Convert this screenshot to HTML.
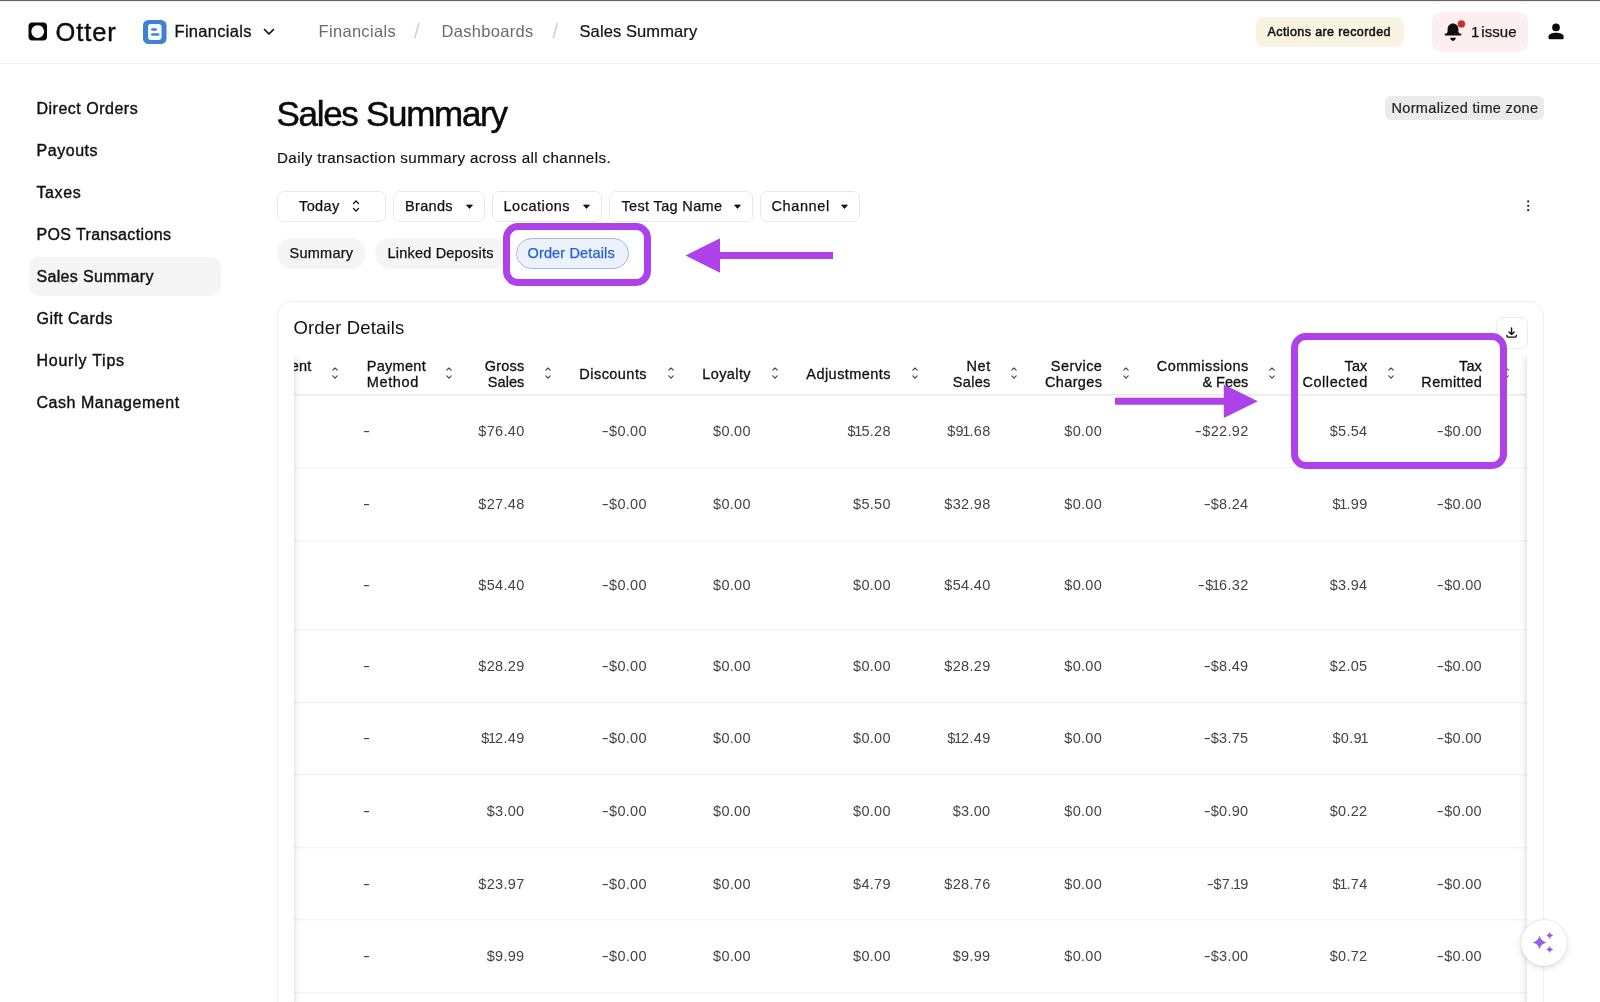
<!DOCTYPE html>
<html lang="en">
<head>
<meta charset="utf-8">
<title>Sales Summary</title>
<style>
*{box-sizing:border-box;margin:0;padding:0}
html,body{width:1600px;height:1002px;overflow:hidden;background:#fff}
body{font-family:"Liberation Sans",sans-serif;color:#111;position:relative}
.abs{position:absolute;white-space:nowrap}
.topline{left:0;top:0;width:1600px;height:2px;background:linear-gradient(#666 0,#666 50%,#ececec 50%,#ececec 100%)}
.hdr{left:0;top:0;width:1600px;height:64px;border-bottom:1px solid #efefef}
.t{position:absolute;white-space:nowrap;line-height:1}
.nav{font-size:16px;color:#111;left:36.500px;-webkit-text-stroke:0.4px #111}
.sel{left:29px;top:257px;width:192px;height:39px;border-radius:10px;background:#f5f5f5}
.bc{font-size:16.5px;top:23px;color:#6b6b6b}
.fbtn{top:191px;height:31px;border:1px solid #e8e8e8;border-radius:7px;background:#fff}
.ft{font-size:14.5px;top:199px;color:#111;-webkit-text-stroke:0.25px #111}
.pill{top:238px;height:31px;border-radius:16px;background:#f5f5f5}
.pt{font-size:14.5px;top:246px;color:#111;-webkit-text-stroke:0.25px #111}
.card{left:277px;top:301px;width:1267px;height:760px;border:1px solid #f0f0f0;border-radius:15px;background:#fff}
.th{font-size:14.5px;color:#111;-webkit-text-stroke:0.3px #111;text-align:right;line-height:16px}
.td{font-size:14.5px;color:#444;text-align:right;letter-spacing:0.3px}
.o{margin:0 -1.300px 0 -1.500px}
.hy{display:inline-block;transform:scaleX(1.450);transform-origin:100% 50%;margin-right:-0.200px}
.rowline{left:294px;width:1232px;height:1px;background:#ececec}
.pbox{border:7px solid #ad41ea;border-radius:15px}
</style>
</head>
<body>
<div id="root" style="position:absolute;left:0;top:0;width:1600px;height:1002px;overflow:hidden;will-change:transform">
<div class="abs hdr"></div>
<div class="abs topline"></div>


<!-- header -->
<svg class="abs" style="left:28px;top:22.400px" width="20" height="20" viewBox="0 0 20 20"><path fill-rule="evenodd" fill="#0a0a0a" d="M4 0.5h11.5c2 0 3.5 1.5 3.5 3.5v11c0 2-1.5 3.5-3.5 3.500H4c-2 0-3.500-1.500-3.500-3.500V4C0.500 2 2 0.500 4 0.500zM9.700 3.200c-3.600 0-6.300 2.800-6.300 6.400s2.700 6.400 6.300 6.400 6.300-2.800 6.300-6.400-2.700-6.400-6.300-6.400z"/></svg>
<div class="t" id="otter" style="left:55.500px;top:19.600px;font-size:25.5px;letter-spacing:0.9px;color:#0a0a0a;-webkit-text-stroke:0.4px #0a0a0a">Otter</div>
<svg class="abs" style="left:143px;top:20px" width="24" height="24" viewBox="0 0 24 24"><rect x="0" y="0" width="23.500" height="24" rx="5.500" fill="#3d84d4"/><rect x="5" y="4" width="13.500" height="16" rx="3.200" fill="#fff"/><rect x="8" y="8.200" width="6" height="2.600" rx="1.300" fill="#3d84d4"/><rect x="8" y="13.200" width="8.500" height="2.600" rx="1.300" fill="#3d84d4"/></svg>
<div class="t" id="fin" style="left:174.500px;top:23px;font-size:16.5px;letter-spacing:0.3px;-webkit-text-stroke:0.3px #111">Financials</div>
<svg class="abs" style="left:262px;top:26px" width="14" height="12" viewBox="0 0 14 12"><path d="M2.500 3.500L7 8l4.500-4.500" fill="none" stroke="#111" stroke-width="1.700" stroke-linecap="round" stroke-linejoin="round"/></svg>
<div class="t bc" id="bc1" style="left:318.500px;letter-spacing:0.32px">Financials</div>
<div class="t bc" style="left:414px;top:21px;font-size:20px;color:#cfcfcf">/</div>
<div class="t bc" id="bc2" style="left:441.500px;letter-spacing:0.32px">Dashboards</div>
<div class="t bc" style="left:552.500px;top:21px;font-size:20px;color:#cfcfcf">/</div>
<div class="t bc" id="bc3" style="left:579.500px;letter-spacing:0.1px;color:#111;-webkit-text-stroke:0.2px #111">Sales Summary</div>

<div class="abs" style="left:1256px;top:17px;width:148px;height:30px;border-radius:8px;background:#f9f3e2"></div>
<div class="t" id="act" style="left:1267.500px;top:26px;font-size:12.5px;letter-spacing:0.4px;color:#111;-webkit-text-stroke:0.5px #111">Actions are recorded</div>
<div class="abs" style="left:1432px;top:12px;width:96px;height:40px;border-radius:9px;background:#fcefee"></div>
<svg class="abs" style="left:1440px;top:16px" width="30" height="30" viewBox="1440 16 30 30"><path fill="#0f0f0f" d="M1453 23.400C1449.900 23.400 1447.600 25.800 1447.600 28.900V31.200C1447.600 32.400 1447 33 1445.800 33.500C1444.900 33.900 1444.600 34.300 1444.600 34.800C1444.600 35.300 1445 35.600 1445.600 35.600H1460.400C1461 35.600 1461.400 35.300 1461.400 34.800C1461.400 34.300 1461.100 33.900 1460.200 33.500C1459 33 1458.400 32.400 1458.400 31.200V28.900C1458.400 25.800 1456.100 23.400 1453 23.400ZM1450.100 37.800H1455.900C1455.600 39.600 1454.500 40.900 1453 40.900C1451.500 40.900 1450.400 39.600 1450.100 37.800Z"/><circle cx="1461.400" cy="23.900" r="3.700" fill="#c9302f"/></svg>
<div class="t" id="iss" style="left:1471px;top:24px;font-size:15px;word-spacing:-2.5px;letter-spacing:0.1px;color:#111;-webkit-text-stroke:0.25px #111">1 issue</div>
<svg class="abs" style="left:1544px;top:20px" width="24" height="24" viewBox="1544 20 24 24"><circle cx="1556" cy="27.400" r="3.850" fill="#0d0d0d"/><path fill="#0d0d0d" d="M1548.500 38V36.300C1548.500 34.400 1552 32.800 1556 32.800C1560 32.800 1563.600 34.400 1563.600 36.300V38Q1563.600 39.200 1562.400 39.200H1549.700Q1548.500 39.200 1548.500 38Z"/></svg>

<!-- sidebar -->
<div class="abs sel"></div>
<div class="t nav" style="top:100.6px;letter-spacing:0.5px">Direct Orders</div>
<div class="t nav" style="top:142.6px;letter-spacing:0.55px">Payouts</div>
<div class="t nav" style="top:184.6px;letter-spacing:0.6px">Taxes</div>
<div class="t nav" style="top:226.6px;letter-spacing:0.37px">POS Transactions</div>
<div class="t nav" style="top:268.6px;letter-spacing:0.33px">Sales Summary</div>
<div class="t nav" style="top:310.6px;letter-spacing:0.45px">Gift Cards</div>
<div class="t nav" style="top:352.6px;letter-spacing:0.75px">Hourly Tips</div>
<div class="t nav" style="top:394.6px;letter-spacing:0.53px">Cash Management</div>

<!-- MAIN -->

<div class="t" id="title" style="left:276.500px;top:95.600px;font-size:35px;letter-spacing:-1.3px;color:#0a0a0a;-webkit-text-stroke:0.5px #0a0a0a">Sales Summary</div>
<div class="t" id="sub" style="left:277px;top:150px;font-size:15.2px;letter-spacing:0.38px;color:#111;-webkit-text-stroke:0.15px #111">Daily transaction summary across all channels.</div>
<div class="abs" style="left:1385px;top:96px;width:159px;height:24px;border-radius:6px;background:#ebebeb"></div>
<div class="t" id="ntz" style="left:1391.500px;top:101px;font-size:14.5px;letter-spacing:0.33px;color:#222;-webkit-text-stroke:0.2px #222">Normalized time zone</div>

<!-- filters -->
<div class="abs fbtn" style="left:277px;width:109px"></div>
<div class="abs fbtn" style="left:393px;width:92px"></div>
<div class="abs fbtn" style="left:492px;width:110px"></div>
<div class="abs fbtn" style="left:609px;width:144px"></div>
<div class="abs fbtn" style="left:760px;width:100px"></div>
<div class="t ft" id="f1" style="left:299px;letter-spacing:0.4px">Today</div>
<div class="t ft" id="f2" style="left:405px;letter-spacing:0.33px">Brands</div>
<div class="t ft" id="f3" style="left:503.500px;letter-spacing:0.5px">Locations</div>
<div class="t ft" id="f4" style="left:621.500px;letter-spacing:0.34px">Test Tag Name</div>
<div class="t ft" id="f5" style="left:771.500px;letter-spacing:0.6px">Channel</div>
<svg class="abs" style="left:350px;top:198px" width="12" height="16" viewBox="0 0 12 16"><path d="M3.500 5.500L6 3l2.500 2.500M3.500 10.500L6 13l2.500-2.500" fill="none" stroke="#111" stroke-width="1.300" stroke-linecap="round" stroke-linejoin="round"/></svg>
<svg class="abs caret" style="left:465px;top:204px" width="9" height="6" viewBox="0 0 9 6"><path d="M1.500 1h6L4.500 4.500z" fill="#111" stroke="#111" stroke-width="0.700" stroke-linejoin="round"/></svg>
<svg class="abs caret" style="left:582px;top:204px" width="9" height="6" viewBox="0 0 9 6"><path d="M1.500 1h6L4.500 4.500z" fill="#111" stroke="#111" stroke-width="0.700" stroke-linejoin="round"/></svg>
<svg class="abs caret" style="left:733px;top:204px" width="9" height="6" viewBox="0 0 9 6"><path d="M1.500 1h6L4.500 4.500z" fill="#111" stroke="#111" stroke-width="0.700" stroke-linejoin="round"/></svg>
<svg class="abs caret" style="left:840px;top:204px" width="9" height="6" viewBox="0 0 9 6"><path d="M1.500 1h6L4.500 4.500z" fill="#111" stroke="#111" stroke-width="0.700" stroke-linejoin="round"/></svg>
<svg class="abs" style="left:1524px;top:198px" width="8" height="16" viewBox="0 0 8 16"><circle cx="4.200" cy="3.400" r="1.100" fill="#222"/><circle cx="4.200" cy="7.800" r="1.100" fill="#222"/><circle cx="4.200" cy="12.200" r="1.100" fill="#222"/></svg>

<!-- tabs -->
<div class="abs pill" style="left:277px;width:89px"></div>
<div class="abs pill" style="left:375px;width:132px"></div>
<div class="abs pill" style="left:516px;width:113px;background:#ecf2fd;border:1px solid #9dbbee"></div>
<div class="t pt" id="p1" style="left:289.500px;letter-spacing:0.25px">Summary</div>
<div class="t pt" id="p2" style="left:387.500px;letter-spacing:0.2px">Linked Deposits</div>
<div class="t pt" id="p3" style="left:527.500px;letter-spacing:0.15px;color:#2560d8;-webkit-text-stroke:0.25px #2560d8">Order Details</div>
<div class="abs pbox" style="left:502.800px;top:223.300px;width:148.500px;height:63px"></div>
<svg class="abs" style="left:680px;top:230px" width="160" height="50" viewBox="680 230 160 50"><path d="M685.500 255.500L720 238.300V252H833.100V259H720V272.800z" fill="#ad41ea"/></svg>

<!-- card -->
<div class="abs card"></div>
<div class="t" id="ctitle" style="left:293.500px;top:319px;font-size:18.5px;letter-spacing:0.14px;color:#111">Order Details</div>
<div class="abs" style="left:1496px;top:317px;width:32px;height:32px;border:1px solid #ebebeb;border-radius:7px;background:#fff"></div>
<svg class="abs" style="left:1500px;top:320px" width="24" height="24" viewBox="1500 320 24 24"><path d="M1511.550 327.900V334.200M1509 331.900L1511.550 334.400L1514.100 331.900M1506.900 335.300v0.700q0 1.100 1.100 1.100h7.200q1.100 0 1.100-1.100v-0.700" fill="none" stroke="#0a0a0a" stroke-width="1.350" stroke-linecap="round" stroke-linejoin="round"/></svg>
<!-- TABLE -->
<div class="abs" id="tbl" style="left:294px;top:345px;width:1233px;height:660px;overflow:hidden">
<div class="t th" id="h0_0" style="left:-50.700px;top:12.5px;text-align:left;letter-spacing:0.2px">Fulfillment</div>
<div class="t th" style="left:-50.700px;top:28.5px;text-align:left;letter-spacing:0.2px">Type</div>
<svg class="abs" style="left:35.6px;top:20.3px" width="10" height="16" viewBox="0 0 10 16"><path d="M2.800 5.100L5 3L7.200 5.100M2.800 10.900L5 13.100L7.200 10.900" fill="none" stroke="#444" stroke-width="1.150" stroke-linecap="round" stroke-linejoin="round"/></svg>
<div class="t th" id="h1_0" style="left:72.7px;top:12.5px;text-align:left;letter-spacing:0.3px">Payment</div>
<div class="t th" id="h1_1" style="left:72.7px;top:28.5px;text-align:left;letter-spacing:0.65px">Method</div>
<svg class="abs" style="left:150px;top:20.3px" width="10" height="16" viewBox="0 0 10 16"><path d="M2.800 5.100L5 3L7.200 5.100M2.800 10.900L5 13.100L7.200 10.900" fill="none" stroke="#444" stroke-width="1.150" stroke-linecap="round" stroke-linejoin="round"/></svg>
<div class="t th" id="h2_0" style="right:1002.45px;top:12.5px;letter-spacing:0.25px">Gross</div>
<div class="t th" id="h2_1" style="right:1002.65px;top:28.5px;letter-spacing:0.05px">Sales</div>
<svg class="abs" style="left:249px;top:20.3px" width="10" height="16" viewBox="0 0 10 16"><path d="M2.800 5.100L5 3L7.200 5.100M2.800 10.900L5 13.100L7.200 10.900" fill="none" stroke="#444" stroke-width="1.150" stroke-linecap="round" stroke-linejoin="round"/></svg>
<div class="t th" id="h3_0" style="right:879.95px;top:20.5px;letter-spacing:0.45px">Discounts</div>
<svg class="abs" style="left:371.6px;top:20.3px" width="10" height="16" viewBox="0 0 10 16"><path d="M2.800 5.100L5 3L7.200 5.100M2.800 10.900L5 13.100L7.200 10.900" fill="none" stroke="#444" stroke-width="1.150" stroke-linecap="round" stroke-linejoin="round"/></svg>
<div class="t th" id="h4_0" style="right:776px;top:20.5px;letter-spacing:0.4px">Loyalty</div>
<svg class="abs" style="left:475.8px;top:20.3px" width="10" height="16" viewBox="0 0 10 16"><path d="M2.800 5.100L5 3L7.200 5.100M2.800 10.900L5 13.100L7.200 10.900" fill="none" stroke="#444" stroke-width="1.150" stroke-linecap="round" stroke-linejoin="round"/></svg>
<div class="t th" id="h5_0" style="right:635.95px;top:20.5px;letter-spacing:0.45px">Adjustments</div>
<svg class="abs" style="left:616px;top:20.3px" width="10" height="16" viewBox="0 0 10 16"><path d="M2.800 5.100L5 3L7.200 5.100M2.800 10.900L5 13.100L7.200 10.900" fill="none" stroke="#444" stroke-width="1.150" stroke-linecap="round" stroke-linejoin="round"/></svg>
<div class="t th" id="h6_0" style="right:536.1px;top:12.5px;letter-spacing:0.6px">Net</div>
<div class="t th" id="h6_1" style="right:536.4px;top:28.5px;letter-spacing:0.3px">Sales</div>
<svg class="abs" style="left:715.2px;top:20.3px" width="10" height="16" viewBox="0 0 10 16"><path d="M2.800 5.100L5 3L7.200 5.100M2.800 10.900L5 13.100L7.200 10.900" fill="none" stroke="#444" stroke-width="1.150" stroke-linecap="round" stroke-linejoin="round"/></svg>
<div class="t th" id="h7_0" style="right:424.65px;top:12.5px;letter-spacing:0.45px">Service</div>
<div class="t th" id="h7_1" style="right:424.75px;top:28.5px;letter-spacing:0.35px">Charges</div>
<svg class="abs" style="left:826.7px;top:20.3px" width="10" height="16" viewBox="0 0 10 16"><path d="M2.800 5.100L5 3L7.200 5.100M2.800 10.900L5 13.100L7.200 10.900" fill="none" stroke="#444" stroke-width="1.150" stroke-linecap="round" stroke-linejoin="round"/></svg>
<div class="t th" id="h8_0" style="right:278.25px;top:12.5px;letter-spacing:0.45px">Commissions</div>
<div class="t th" id="h8_1" style="right:278.7px;top:28.5px;letter-spacing:0px">&amp; Fees</div>
<svg class="abs" style="left:973px;top:20.3px" width="10" height="16" viewBox="0 0 10 16"><path d="M2.800 5.100L5 3L7.200 5.100M2.800 10.900L5 13.100L7.200 10.900" fill="none" stroke="#444" stroke-width="1.150" stroke-linecap="round" stroke-linejoin="round"/></svg>
<div class="t th" id="h9_0" style="right:159.6px;top:12.5px;letter-spacing:0.1px">Tax</div>
<div class="t th" id="h9_1" style="right:159.15px;top:28.5px;letter-spacing:0.55px">Collected</div>
<svg class="abs" style="left:1092px;top:20.3px" width="10" height="16" viewBox="0 0 10 16"><path d="M2.800 5.100L5 3L7.200 5.100M2.800 10.900L5 13.100L7.200 10.900" fill="none" stroke="#444" stroke-width="1.150" stroke-linecap="round" stroke-linejoin="round"/></svg>
<div class="t th" id="h10_0" style="right:45.1px;top:12.5px;letter-spacing:0.1px">Tax</div>
<div class="t th" id="h10_1" style="right:44.85px;top:28.5px;letter-spacing:0.35px">Remitted</div>
<svg class="abs" style="left:1207px;top:20.3px" width="10" height="16" viewBox="0 0 10 16"><path d="M2.800 5.100L5 3L7.200 5.100M2.800 10.900L5 13.100L7.200 10.900" fill="none" stroke="#444" stroke-width="1.150" stroke-linecap="round" stroke-linejoin="round"/></svg>
<div class="abs" style="left:0;top:49px;width:1233px;height:2px;background:linear-gradient(#ebebeb 0,#ebebeb 50%,#f4f4f4 50%,#f4f4f4 100%)"></div>
<div class="abs" style="left:0;top:122px;width:1233px;height:2px;background:linear-gradient(#f4f4f4 0,#f4f4f4 50%,#fbfbfb 50%,#fbfbfb 100%)"></div>
<div class="abs" style="left:0;top:195px;width:1233px;height:2px;background:linear-gradient(#f4f4f4 0,#f4f4f4 50%,#fbfbfb 50%,#fbfbfb 100%)"></div>
<div class="abs" style="left:0;top:284px;width:1233px;height:2px;background:linear-gradient(#f4f4f4 0,#f4f4f4 50%,#fbfbfb 50%,#fbfbfb 100%)"></div>
<div class="abs" style="left:0;top:357px;width:1233px;height:2px;background:linear-gradient(#f4f4f4 0,#f4f4f4 50%,#fbfbfb 50%,#fbfbfb 100%)"></div>
<div class="abs" style="left:0;top:429px;width:1233px;height:2px;background:linear-gradient(#f4f4f4 0,#f4f4f4 50%,#fbfbfb 50%,#fbfbfb 100%)"></div>
<div class="abs" style="left:0;top:502px;width:1233px;height:2px;background:linear-gradient(#f4f4f4 0,#f4f4f4 50%,#fbfbfb 50%,#fbfbfb 100%)"></div>
<div class="abs" style="left:0;top:574px;width:1233px;height:2px;background:linear-gradient(#f4f4f4 0,#f4f4f4 50%,#fbfbfb 50%,#fbfbfb 100%)"></div>
<div class="abs" style="left:0;top:647px;width:1233px;height:2px;background:linear-gradient(#f4f4f4 0,#f4f4f4 50%,#fbfbfb 50%,#fbfbfb 100%)"></div>
<div class="t td" style="left:68.69999999999999px;top:79px;text-align:left"><span class="hy" style="transform-origin:0 50%">-</span></div>
<div class="t td" style="right:1002.5px;top:79px">$76.40</div>
<div class="t td" style="right:880.2px;top:79px"><span class="hy">-</span>$0.00</div>
<div class="t td" style="right:776.2px;top:79px">$0.00</div>
<div class="t td" style="right:636.2px;top:79px">$<span class="o">1</span>5.28</div>
<div class="t td" style="right:536.5px;top:79px">$9<span class="o">1</span>.68</div>
<div class="t td" style="right:424.9px;top:79px">$0.00</div>
<div class="t td" style="right:278.5px;top:79px"><span class="hy">-</span>$22.92</div>
<div class="t td" style="right:159.5px;top:79px">$5.54</div>
<div class="t td" style="right:45px;top:79px"><span class="hy">-</span>$0.00</div>
<div class="t td" style="left:68.69999999999999px;top:152px;text-align:left"><span class="hy" style="transform-origin:0 50%">-</span></div>
<div class="t td" style="right:1002.5px;top:152px">$27.48</div>
<div class="t td" style="right:880.2px;top:152px"><span class="hy">-</span>$0.00</div>
<div class="t td" style="right:776.2px;top:152px">$0.00</div>
<div class="t td" style="right:636.2px;top:152px">$5.50</div>
<div class="t td" style="right:536.5px;top:152px">$32.98</div>
<div class="t td" style="right:424.9px;top:152px">$0.00</div>
<div class="t td" style="right:278.5px;top:152px"><span class="hy">-</span>$8.24</div>
<div class="t td" style="right:159.5px;top:152px">$<span class="o">1</span>.99</div>
<div class="t td" style="right:45px;top:152px"><span class="hy">-</span>$0.00</div>
<div class="t td" style="left:68.69999999999999px;top:233px;text-align:left"><span class="hy" style="transform-origin:0 50%">-</span></div>
<div class="t td" style="right:1002.5px;top:233px">$54.40</div>
<div class="t td" style="right:880.2px;top:233px"><span class="hy">-</span>$0.00</div>
<div class="t td" style="right:776.2px;top:233px">$0.00</div>
<div class="t td" style="right:636.2px;top:233px">$0.00</div>
<div class="t td" style="right:536.5px;top:233px">$54.40</div>
<div class="t td" style="right:424.9px;top:233px">$0.00</div>
<div class="t td" style="right:278.5px;top:233px"><span class="hy">-</span>$<span class="o">1</span>6.32</div>
<div class="t td" style="right:159.5px;top:233px">$3.94</div>
<div class="t td" style="right:45px;top:233px"><span class="hy">-</span>$0.00</div>
<div class="t td" style="left:68.69999999999999px;top:313.75px;text-align:left"><span class="hy" style="transform-origin:0 50%">-</span></div>
<div class="t td" style="right:1002.5px;top:313.75px">$28.29</div>
<div class="t td" style="right:880.2px;top:313.75px"><span class="hy">-</span>$0.00</div>
<div class="t td" style="right:776.2px;top:313.75px">$0.00</div>
<div class="t td" style="right:636.2px;top:313.75px">$0.00</div>
<div class="t td" style="right:536.5px;top:313.75px">$28.29</div>
<div class="t td" style="right:424.9px;top:313.75px">$0.00</div>
<div class="t td" style="right:278.5px;top:313.75px"><span class="hy">-</span>$8.49</div>
<div class="t td" style="right:159.5px;top:313.75px">$2.05</div>
<div class="t td" style="right:45px;top:313.75px"><span class="hy">-</span>$0.00</div>
<div class="t td" style="left:68.69999999999999px;top:386.35px;text-align:left"><span class="hy" style="transform-origin:0 50%">-</span></div>
<div class="t td" style="right:1002.5px;top:386.35px">$<span class="o">1</span>2.49</div>
<div class="t td" style="right:880.2px;top:386.35px"><span class="hy">-</span>$0.00</div>
<div class="t td" style="right:776.2px;top:386.35px">$0.00</div>
<div class="t td" style="right:636.2px;top:386.35px">$0.00</div>
<div class="t td" style="right:536.5px;top:386.35px">$<span class="o">1</span>2.49</div>
<div class="t td" style="right:424.9px;top:386.35px">$0.00</div>
<div class="t td" style="right:278.5px;top:386.35px"><span class="hy">-</span>$3.75</div>
<div class="t td" style="right:159.5px;top:386.35px">$0.9<span class="o">1</span></div>
<div class="t td" style="right:45px;top:386.35px"><span class="hy">-</span>$0.00</div>
<div class="t td" style="left:68.69999999999999px;top:459.1px;text-align:left"><span class="hy" style="transform-origin:0 50%">-</span></div>
<div class="t td" style="right:1002.5px;top:459.1px">$3.00</div>
<div class="t td" style="right:880.2px;top:459.1px"><span class="hy">-</span>$0.00</div>
<div class="t td" style="right:776.2px;top:459.1px">$0.00</div>
<div class="t td" style="right:636.2px;top:459.1px">$0.00</div>
<div class="t td" style="right:536.5px;top:459.1px">$3.00</div>
<div class="t td" style="right:424.9px;top:459.1px">$0.00</div>
<div class="t td" style="right:278.5px;top:459.1px"><span class="hy">-</span>$0.90</div>
<div class="t td" style="right:159.5px;top:459.1px">$0.22</div>
<div class="t td" style="right:45px;top:459.1px"><span class="hy">-</span>$0.00</div>
<div class="t td" style="left:68.69999999999999px;top:531.6px;text-align:left"><span class="hy" style="transform-origin:0 50%">-</span></div>
<div class="t td" style="right:1002.5px;top:531.6px">$23.97</div>
<div class="t td" style="right:880.2px;top:531.6px"><span class="hy">-</span>$0.00</div>
<div class="t td" style="right:776.2px;top:531.6px">$0.00</div>
<div class="t td" style="right:636.2px;top:531.6px">$4.79</div>
<div class="t td" style="right:536.5px;top:531.6px">$28.76</div>
<div class="t td" style="right:424.9px;top:531.6px">$0.00</div>
<div class="t td" style="right:278.5px;top:531.6px"><span class="hy">-</span>$7.<span class="o">1</span>9</div>
<div class="t td" style="right:159.5px;top:531.6px">$<span class="o">1</span>.74</div>
<div class="t td" style="right:45px;top:531.6px"><span class="hy">-</span>$0.00</div>
<div class="t td" style="left:68.69999999999999px;top:604.1px;text-align:left"><span class="hy" style="transform-origin:0 50%">-</span></div>
<div class="t td" style="right:1002.5px;top:604.1px">$9.99</div>
<div class="t td" style="right:880.2px;top:604.1px"><span class="hy">-</span>$0.00</div>
<div class="t td" style="right:776.2px;top:604.1px">$0.00</div>
<div class="t td" style="right:636.2px;top:604.1px">$0.00</div>
<div class="t td" style="right:536.5px;top:604.1px">$9.99</div>
<div class="t td" style="right:424.9px;top:604.1px">$0.00</div>
<div class="t td" style="right:278.5px;top:604.1px"><span class="hy">-</span>$3.00</div>
<div class="t td" style="right:159.5px;top:604.1px">$0.72</div>
<div class="t td" style="right:45px;top:604.1px"><span class="hy">-</span>$0.00</div>
<div class="abs" style="left:0;top:9px;width:8px;height:660px;background:linear-gradient(to right,rgba(0,0,0,0.09),rgba(0,0,0,0.035) 35%,rgba(0,0,0,0.01) 70%,rgba(0,0,0,0));-webkit-mask-image:linear-gradient(to bottom,transparent 0,#000 7px)"></div>
<div class="abs" style="right:0;top:9px;width:8px;height:660px;background:linear-gradient(to left,rgba(0,0,0,0.09),rgba(0,0,0,0.035) 35%,rgba(0,0,0,0.01) 70%,rgba(0,0,0,0));-webkit-mask-image:linear-gradient(to bottom,transparent 0,#000 7px)"></div>
</div>
<div class="abs pbox" style="left:1290.500px;top:333.300px;width:216px;height:135.500px"></div>
<svg class="abs" style="left:1100px;top:370px" width="170" height="60" viewBox="1100 370 170 60"><path d="M1257.800 401.200L1223.800 384.400V397.800H1115V404.800H1223.800V418.100z" fill="#ad41ea"/></svg>
<div class="abs" style="left:1520.600px;top:919.700px;width:46.400px;height:46.400px;border-radius:50%;background:#fff;box-shadow:0 2px 6px rgba(0,0,0,0.13),0 0 2px rgba(0,0,0,0.16)"></div>
<svg class="abs" style="left:1520px;top:920px" width="48" height="48" viewBox="1520 920 48 48"><path fill="#9360e8" d="M1539.60 935.50Q1540.84 941.16 1546.50 942.40Q1540.84 943.64 1539.60 949.30Q1538.36 943.64 1532.70 942.40Q1538.36 941.16 1539.60 935.50zM1549.70 931.90Q1550.33 934.77 1553.20 935.40Q1550.33 936.03 1549.70 938.90Q1549.07 936.03 1546.20 935.40Q1549.07 934.77 1549.70 931.90zM1549.70 945.90Q1550.33 948.77 1553.20 949.40Q1550.33 950.03 1549.70 952.90Q1549.07 950.03 1546.20 949.40Q1549.07 948.77 1549.70 945.90z"/></svg>
<!-- /TABLE -->

</div>
</body>
</html>
